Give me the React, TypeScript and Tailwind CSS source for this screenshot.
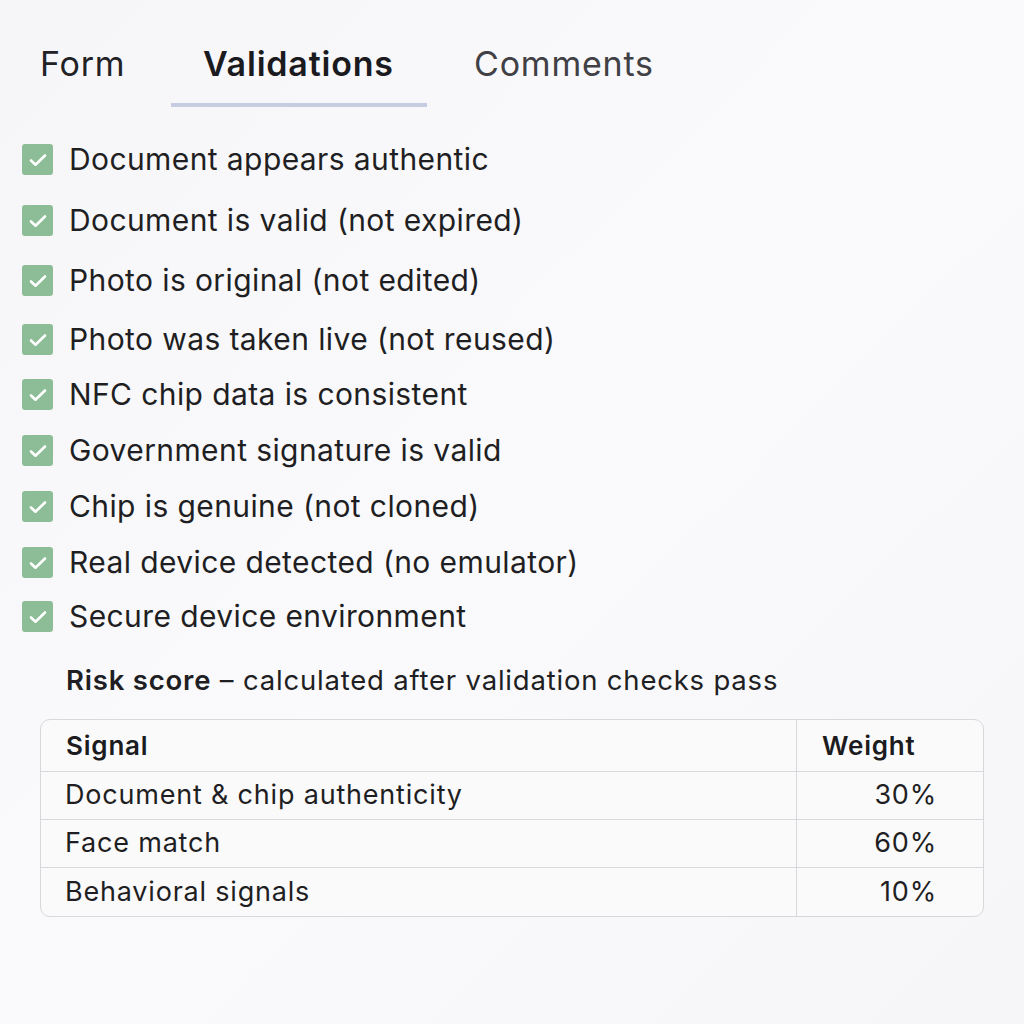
import React from "react";

const checks = [
  "Document appears authentic",
  "Document is valid (not expired)",
  "Photo is original (not edited)",
  "Photo was taken live (not reused)",
  "NFC chip data is consistent",
  "Government signature is valid",
  "Chip is genuine (not cloned)",
  "Real device detected (no emulator)",
  "Secure device environment",
];

const rowsGap = [0, 61, 60, 59, 55, 56, 56, 56, 54];

const signals = [
  ["Document & chip authenticity", "30%"],
  ["Face match", "60%"],
  ["Behavioral signals", "10%"],
];

function Check() {
  return (
    <div className="w-[31px] h-[31px] rounded-[3px] bg-[#8dbd97] flex items-center justify-center shrink-0">
      <svg width="18" height="18" viewBox="0 0 18 18" fill="none" stroke="white" strokeWidth="2.6" strokeLinecap="round" strokeLinejoin="round">
        <path d="M2 9.5l4.5 4.2L16 4.5" />
      </svg>
    </div>
  );
}

export default function App() {
  return (
    <div
      className="w-[1024px] h-[1024px] bg-gradient-to-br from-[#f6f6f9] via-[#fafafc] to-[#f6f6f9] text-[#1d1d20] overflow-hidden tracking-[0.8px]"
      style={{ fontFamily: "Inter, 'Noto Sans', sans-serif" }}
    >
      <div className="flex items-start pt-[42px] pl-[40px]">
        <div className="text-[34px] leading-[44px] text-[#222226] w-[131px]">Form</div>
        <div className="flex flex-col items-start">
          <div className="text-[34px] leading-[44px] font-semibold text-[#1b1b1f] pl-[32px] w-[256px]">Validations</div>
          <div className="mt-[17px] w-[256px] h-[4px] bg-[#c6cde0]" />
        </div>
        <div className="text-[34px] leading-[44px] text-[#404045] pl-[47px]">Comments</div>
      </div>

      <div className="flex flex-col pl-[22px] mt-[37px]">
        {checks.map((c, i) => (
          <div key={c} className="flex items-center gap-[16px]" style={{ marginTop: rowsGap[i] - 31 > 0 ? rowsGap[i] - 31 : 0 }}>
            <Check />
            <div className="text-[30px] leading-[31px] tracking-[0.4px] text-[#1f1f23]">{c}</div>
          </div>
        ))}
      </div>

      <div className="pl-[66px] mt-[31px] text-[27.5px] leading-[34px] text-[#1f1f23]">
        <span className="font-semibold">Risk score</span> – calculated after validation checks pass
      </div>

      <div className="mx-[40px] mt-[22px] w-[944px] border border-[#d7d7dc] rounded-[10px] overflow-hidden bg-[#fafafb]">
        <div className="flex h-[52px] border-b border-[#d7d7dc]">
          <div className="w-[756px] border-r border-[#d7d7dc] flex items-center pl-[25px] text-[26px] font-semibold text-[#1c1c20]">Signal</div>
          <div className="flex-1 flex items-center pl-[25px] text-[26px] font-semibold text-[#1c1c20]">Weight</div>
        </div>
        {signals.map(([s, w], i) => (
          <div key={s} className={`flex h-[48px] ${i < 2 ? "border-b border-[#d7d7dc]" : ""}`}>
            <div className="w-[756px] border-r border-[#d7d7dc] flex items-center pl-[24px] text-[27px] text-[#1f1f23]">{s}</div>
            <div className="flex-1 flex items-center justify-end pr-[46px] text-[27px] text-[#1f1f23]">{w}</div>
          </div>
        ))}
      </div>
    </div>
  );
}
